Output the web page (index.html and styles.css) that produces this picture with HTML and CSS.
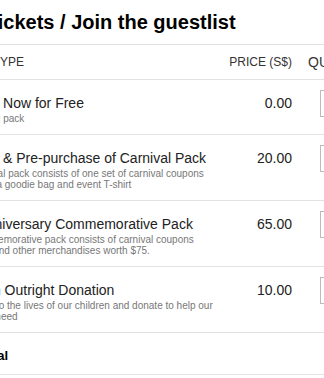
FILE: index.html
```html
<!DOCTYPE html>
<html lang="en">
<head>
<meta charset="utf-8">
<title>Tickets</title>
<link rel="stylesheet" href="styles.css">
</head>
<body>
<div class="page">
  <h2 class="heading">Get Tickets / Join the guestlist</h2>
  <div class="tickets">
    <div class="row head">
      <div class="c-type">Ticket Type</div>
      <div class="c-price">Price (S$)</div>
      <div class="c-qty">Quantity</div>
    </div>
    <div class="row">
      <div class="c-type">
        <div class="name">Register Now for Free</div>
        <div class="desc">Free goodie pack</div>
      </div>
      <div class="c-price">0.00</div>
      <div class="c-qty"><select class="qty"><option>0</option><option>1</option></select></div>
    </div>
    <div class="row">
      <div class="c-type">
        <div class="name">Register &amp; Pre-purchase of Carnival Pack</div>
        <div class="desc">This Carnival pack consists of one set of carnival coupons<br>worth $15, a goodie bag and event T-shirt</div>
      </div>
      <div class="c-price">20.00</div>
      <div class="c-qty"><select class="qty"><option>0</option><option>1</option></select></div>
    </div>
    <div class="row">
      <div class="c-type">
        <div class="name">25th Anniversary Commemorative Pack</div>
        <div class="desc">This Commemorative pack consists of carnival coupons<br>plus a tee and other merchandises worth $75.</div>
      </div>
      <div class="c-price">65.00</div>
      <div class="c-qty"><select class="qty"><option>0</option><option>1</option></select></div>
    </div>
    <div class="row">
      <div class="c-type">
        <div class="name">Make an Outright Donation</div>
        <div class="desc">Contribute to the lives of our children and donate to help our<br>children in need</div>
      </div>
      <div class="c-price">10.00</div>
      <div class="c-qty"><select class="qty"><option>0</option><option>1</option></select></div>
    </div>
    <div class="row total">
      <div class="c-type total-label">Total</div>
      <div class="c-price"></div>
      <div class="c-qty"></div>
    </div>
  </div>
</div>
</body>
</html>
```

FILE: styles.css
```css
html, body {
  margin: 0;
  padding: 0;
  background: #fff;
  overflow: hidden;
}

body {
  font-family: "Liberation Sans", Arial, sans-serif;
  color: #222;
}

.page {
  margin-left: -53px;
  width: 560px;
}

.heading {
  margin: 0;
  padding: 10px 0 10px;
  font-size: 20px;
  line-height: 24px;
  font-weight: bold;
  color: #000;
  border-bottom: 1px solid #e2e2e2;
}

.row {
  display: grid;
  grid-template-columns: 275px 70px 1fr;
  border-bottom: 1px solid #e2e2e2;
  padding: 15px 0 10px;
  align-items: start;
  white-space: nowrap;
}

.row.head {
  padding: 10px 0 10px;
  font-size: 12px;
  line-height: 14px;
  text-transform: uppercase;
  color: #333;
}

.c-price {
  text-align: right;
}

.row.head .c-qty {
  padding-left: 16px;
}

.name {
  font-size: 14px;
  line-height: 16px;
  color: #222;
}

.desc {
  margin-top: 2px;
  font-size: 10px;
  line-height: 11px;
  color: #777;
}

.row .c-price {
  font-size: 14px;
  line-height: 16px;
}

.row.head .c-price {
  font-size: 12px;
  line-height: 14px;
}

.c-qty {
  font-size: 14px;
}

.qty {
  display: block;
  margin: -5px 0 0 28px;
  width: 70px;
  height: 27px;
  box-sizing: border-box;
  border: 1px solid #bbb;
  border-radius: 0;
  background: #fff;
  padding: 0 0 0 14px;
  font-family: inherit;
  font-size: 13px;
  color: #333;
  -webkit-appearance: none;
  appearance: none;
}

.row.total {
  padding: 15px 0 10px;
}

.total-label {
  padding-left: 31px;
  font-size: 13px;
  line-height: 16px;
  font-weight: bold;
  color: #000;
}
```
